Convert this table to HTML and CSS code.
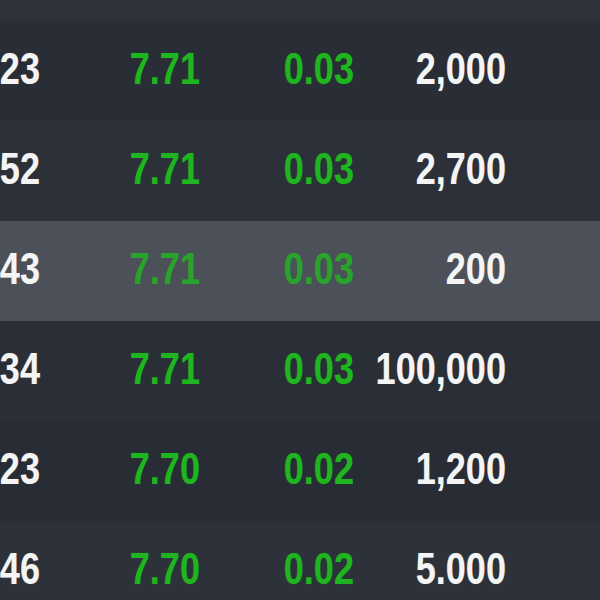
FILE: index.html
```html
<!DOCTYPE html>
<html lang="en">
<head>
<meta charset="utf-8">
<title>Quotes</title>
<link rel="stylesheet" href="styles.css">
</head>
<body>
<div class="board">
  <div class="row row-top"></div>
  <div class="row row-a">
    <span class="cell">23</span><span class="cell up">7.71</span><span class="cell up">0.03</span><span class="cell">2,000</span>
  </div>
  <div class="row row-b">
    <span class="cell">52</span><span class="cell up">7.71</span><span class="cell up">0.03</span><span class="cell">2,700</span>
  </div>
  <div class="row row-hl">
    <span class="cell">43</span><span class="cell up">7.71</span><span class="cell up">0.03</span><span class="cell">200</span>
  </div>
  <div class="row row-c">
    <span class="cell">34</span><span class="cell up">7.71</span><span class="cell up">0.03</span><span class="cell">100,000</span>
  </div>
  <div class="row row-d">
    <span class="cell">23</span><span class="cell up">7.70</span><span class="cell up">0.02</span><span class="cell">1,200</span>
  </div>
  <div class="row row-e">
    <span class="cell">46</span><span class="cell up">7.70</span><span class="cell up">0.02</span><span class="cell">5.000</span>
  </div>
</div>
</body>
</html>
```
FILE: styles.css
```css
html, body {
  margin: 0;
  padding: 0;
  background: #2a2f37;
  overflow: hidden;
}
.board {
  width: 600px;
  height: 600px;
  overflow: hidden;
  display: flex;
  flex-direction: column;
  font-family: "Liberation Sans", Arial, sans-serif;
  font-weight: bold;
  font-size: 44px;
  color: #f4f4f4;
}
.row {
  flex: none;
  height: 100px;
  display: grid;
  grid-template-columns: 40px 160px 154px 152px;
  align-items: center;
  padding-bottom: 4px;
  box-sizing: border-box;
}
.row-top { height: 21px; background: #2e333b; padding: 0; }
.row-a { background: #292e36; }
.row-b { background: #2c3139; }
.row-hl { background: #4b5059; }
.row-c { background: #2a2f37; }
.row-d { background: #282d35; }
.row-e { background: #2d323a; }
.cell {
  display: flex;
  justify-content: flex-end;
  white-space: nowrap;
  line-height: 1;
  transform: scaleX(0.82);
  transform-origin: right center;
  text-shadow: 0 0 1px rgba(255, 255, 255, 0.25);
}
.up { color: #1fb51f; text-shadow: 0 0 1px rgba(31, 181, 31, 0.4); }
.row-hl .up { color: #29a32b; }
```
